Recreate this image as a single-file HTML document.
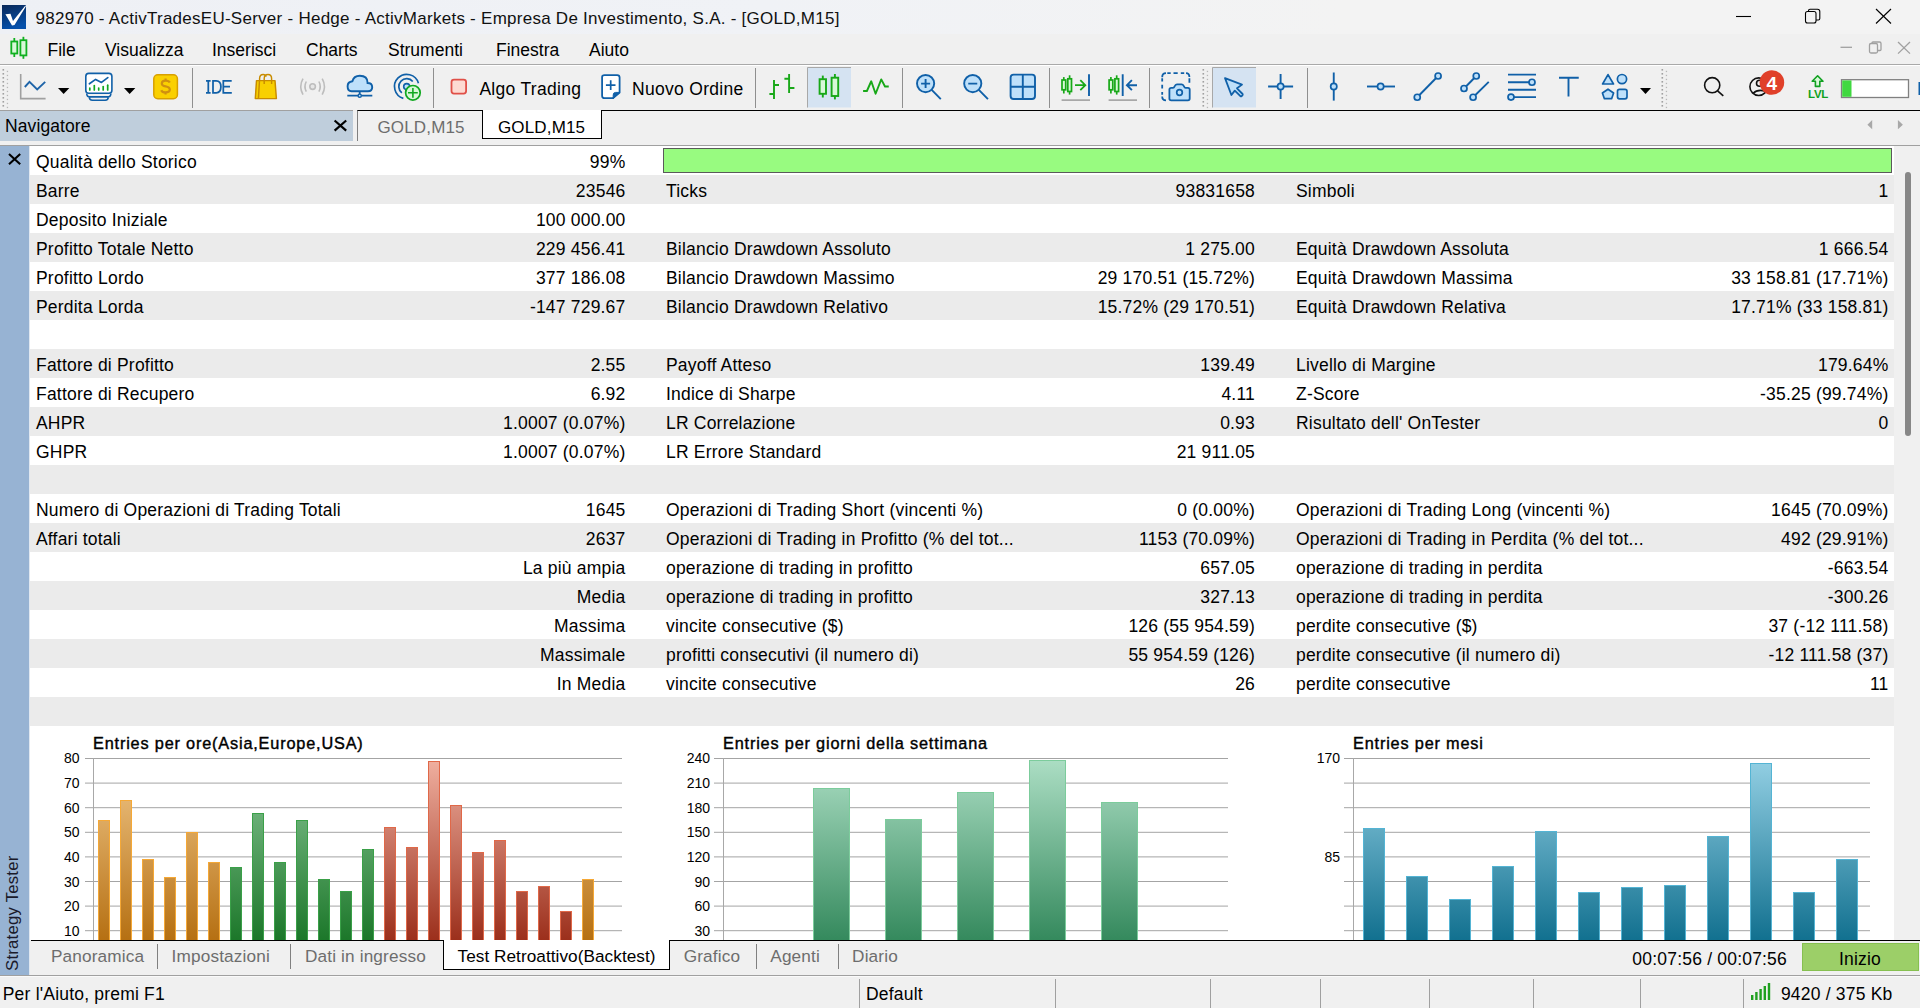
<!DOCTYPE html>
<html><head><meta charset="utf-8"><style>
*{margin:0;padding:0;box-sizing:border-box}
html,body{width:1920px;height:1008px;overflow:hidden;background:#f0f0f0;font-family:"Liberation Sans",sans-serif;color:#000}
.a{position:absolute}
.t{position:absolute;white-space:nowrap;font-size:17.5px;letter-spacing:0.2px;line-height:20px}
.r{text-align:right}
#title{left:0;top:0;width:1920px;height:34px;background:linear-gradient(90deg,#eef0f5 0%,#f0f2f6 40%,#f3f3f3 70%,#f3f3f3 100%)}
#menu{left:0;top:34px;width:1920px;height:30px;background:#f0f0f0}
#mline{left:0;top:64px;width:1920px;height:1px;background:#a9a9a9;box-shadow:0 1px 0 #fff}
#tool{left:0;top:65px;width:1920px;height:45px;background:#f0f0f0}
.sep{position:absolute;top:68px;width:1px;height:40px;background:#8f8f8f}
#navh{left:0;top:110px;width:353px;height:31px;background:#bfcedc;border-top:1px solid #a0a0a0}
#tabs{left:357px;top:110px;width:1563px;height:31px;border-top:1px solid #000;border-left:1px solid #808080}
#hline{left:0;top:145px;width:1920px;height:1px;background:#a0a0a0}
#strip{left:0;top:146px;width:29px;height:829px;background:#97b3d3}
#strip2{left:29px;top:146px;width:1px;height:829px;background:#dfe7f0}
.row{position:absolute;left:30px;width:1864px;height:29px}
.g{background:#ebebeb}
.w{background:#fff}
#scroll{left:1894px;top:146px;width:26px;height:794px;background:#f0f0f0}
#thumb{left:1905px;top:172px;width:6px;height:264px;background:#878787;border-radius:3px}
#chart{left:30px;top:726px;width:1864px;height:214px;background:#fff;overflow:hidden}
#btline{left:31px;top:940px;width:1889px;height:1px;background:#000}
#btabs{left:30px;top:941px;width:1890px;height:34px;background:#f0f0f0}
#sline{left:0;top:975px;width:1920px;height:1px;background:#a0a0a0}
#status{left:0;top:976px;width:1920px;height:32px;background:#f0f0f0}
.ssep{position:absolute;top:979px;width:1px;height:29px;background:#a0a0a0}
.tab{position:absolute;white-space:nowrap;font-size:17.5px;letter-spacing:0.2px;color:#6d6d6d;line-height:20px}
.tsep{position:absolute;top:944px;width:1px;height:25px;background:#808080}
.ax{position:absolute;font-size:13px;line-height:14px;text-align:right;width:40px;color:#000;letter-spacing:0.3px}
.ct{position:absolute;font-size:16.5px;letter-spacing:0.6px;line-height:18px;white-space:nowrap;-webkit-text-stroke:0.4px #000}

</style></head><body>
<div id="title" class="a"></div>
<div class="t" style="top:10.41px;font-size:17px;line-height:1;letter-spacing:0.26px;color:#111;left:35.60px;">982970 - ActivTradesEU-Server - Hedge - ActivMarkets - Empresa De Investimento, S.A. - [GOLD,M15]</div>
<div id="menu" class="a"></div><div id="tool" class="a"></div><div id="mline" class="a"></div>
<div class="t" style="top:41.79px;font-size:17.5px;line-height:1;letter-spacing:0px;left:47.50px;">File</div>
<div class="t" style="top:41.79px;font-size:17.5px;line-height:1;letter-spacing:0px;left:105.00px;">Visualizza</div>
<div class="t" style="top:41.79px;font-size:17.5px;line-height:1;letter-spacing:0px;left:212.00px;">Inserisci</div>
<div class="t" style="top:41.79px;font-size:17.5px;line-height:1;letter-spacing:0px;left:306.00px;">Charts</div>
<div class="t" style="top:41.79px;font-size:17.5px;line-height:1;letter-spacing:0px;left:388.00px;">Strumenti</div>
<div class="t" style="top:41.79px;font-size:17.5px;line-height:1;letter-spacing:0px;left:496.00px;">Finestra</div>
<div class="t" style="top:41.79px;font-size:17.5px;line-height:1;letter-spacing:0px;left:589.00px;">Aiuto</div>
<div class="t" style="top:81.19px;font-size:17.5px;line-height:1;letter-spacing:0.3px;left:479.40px;">Algo Trading</div>
<div class="t" style="top:81.19px;font-size:17.5px;line-height:1;letter-spacing:0.3px;left:632.00px;">Nuovo Ordine</div>
<div class="sep" style="left:192px"></div>
<div class="sep" style="left:433px"></div>
<div class="sep" style="left:755px"></div>
<div class="sep" style="left:902px"></div>
<div class="sep" style="left:1049px"></div>
<div class="sep" style="left:1149px"></div>
<div class="sep" style="left:1307px"></div>
<div id="navh" class="a"></div>
<div class="t" style="top:118.39px;font-size:17.5px;line-height:1;letter-spacing:0.1px;left:5.00px;">Navigatore</div>
<div id="tabs" class="a"></div>
<div class="a" style="left:482px;top:110px;width:120px;height:29px;background:#fff;border:1px solid #000;border-top:none"></div>
<div class="t" style="top:118.81px;font-size:17px;line-height:1;letter-spacing:0.15px;color:#6d6d6d;left:377.50px;">GOLD,M15</div>
<div class="t" style="top:118.81px;font-size:17px;line-height:1;letter-spacing:0.15px;left:498.00px;">GOLD,M15</div>
<div id="hline" class="a"></div>
<div id="strip" class="a"></div><div id="strip2" class="a"></div>
<div class="a" style="left:0;top:0;width:130px;height:17px;transform-origin:0 0;transform:translate(5.2px,971px) rotate(-90deg);font-size:16.8px;line-height:1;white-space:nowrap;letter-spacing:0.2px;color:#1a1a2a">Strategy Tester</div>
<div id="scroll" class="a"></div><div id="thumb" class="a"></div>
<div class="row w" style="top:146px"></div>
<div class="t" style="top:153.89px;font-size:17.5px;line-height:1;left:36.00px;">Qualità dello Storico</div>
<div class="t" style="top:153.89px;font-size:17.5px;line-height:1;right:1294.50px;">99%</div>
<div class="row g" style="top:175px"></div>
<div class="t" style="top:182.89px;font-size:17.5px;line-height:1;left:36.00px;">Barre</div>
<div class="t" style="top:182.89px;font-size:17.5px;line-height:1;right:1294.50px;">23546</div>
<div class="t" style="top:182.89px;font-size:17.5px;line-height:1;left:666.00px;">Ticks</div>
<div class="t" style="top:182.89px;font-size:17.5px;line-height:1;right:665.00px;">93831658</div>
<div class="t" style="top:182.89px;font-size:17.5px;line-height:1;left:1296.00px;">Simboli</div>
<div class="t" style="top:182.89px;font-size:17.5px;line-height:1;right:31.50px;">1</div>
<div class="row w" style="top:204px"></div>
<div class="t" style="top:211.89px;font-size:17.5px;line-height:1;left:36.00px;">Deposito Iniziale</div>
<div class="t" style="top:211.89px;font-size:17.5px;line-height:1;right:1294.50px;">100 000.00</div>
<div class="row g" style="top:233px"></div>
<div class="t" style="top:240.89px;font-size:17.5px;line-height:1;left:36.00px;">Profitto Totale Netto</div>
<div class="t" style="top:240.89px;font-size:17.5px;line-height:1;right:1294.50px;">229 456.41</div>
<div class="t" style="top:240.89px;font-size:17.5px;line-height:1;left:666.00px;">Bilancio Drawdown Assoluto</div>
<div class="t" style="top:240.89px;font-size:17.5px;line-height:1;right:665.00px;">1 275.00</div>
<div class="t" style="top:240.89px;font-size:17.5px;line-height:1;left:1296.00px;">Equità Drawdown Assoluta</div>
<div class="t" style="top:240.89px;font-size:17.5px;line-height:1;right:31.50px;">1 666.54</div>
<div class="row w" style="top:262px"></div>
<div class="t" style="top:269.89px;font-size:17.5px;line-height:1;left:36.00px;">Profitto Lordo</div>
<div class="t" style="top:269.89px;font-size:17.5px;line-height:1;right:1294.50px;">377 186.08</div>
<div class="t" style="top:269.89px;font-size:17.5px;line-height:1;left:666.00px;">Bilancio Drawdown Massimo</div>
<div class="t" style="top:269.89px;font-size:17.5px;line-height:1;right:665.00px;">29 170.51 (15.72%)</div>
<div class="t" style="top:269.89px;font-size:17.5px;line-height:1;left:1296.00px;">Equità Drawdown Massima</div>
<div class="t" style="top:269.89px;font-size:17.5px;line-height:1;right:31.50px;">33 158.81 (17.71%)</div>
<div class="row g" style="top:291px"></div>
<div class="t" style="top:298.89px;font-size:17.5px;line-height:1;left:36.00px;">Perdita Lorda</div>
<div class="t" style="top:298.89px;font-size:17.5px;line-height:1;right:1294.50px;">-147 729.67</div>
<div class="t" style="top:298.89px;font-size:17.5px;line-height:1;left:666.00px;">Bilancio Drawdown Relativo</div>
<div class="t" style="top:298.89px;font-size:17.5px;line-height:1;right:665.00px;">15.72% (29 170.51)</div>
<div class="t" style="top:298.89px;font-size:17.5px;line-height:1;left:1296.00px;">Equità Drawdown Relativa</div>
<div class="t" style="top:298.89px;font-size:17.5px;line-height:1;right:31.50px;">17.71% (33 158.81)</div>
<div class="row w" style="top:320px"></div>
<div class="row g" style="top:349px"></div>
<div class="t" style="top:356.89px;font-size:17.5px;line-height:1;left:36.00px;">Fattore di Profitto</div>
<div class="t" style="top:356.89px;font-size:17.5px;line-height:1;right:1294.50px;">2.55</div>
<div class="t" style="top:356.89px;font-size:17.5px;line-height:1;left:666.00px;">Payoff Atteso</div>
<div class="t" style="top:356.89px;font-size:17.5px;line-height:1;right:665.00px;">139.49</div>
<div class="t" style="top:356.89px;font-size:17.5px;line-height:1;left:1296.00px;">Livello di Margine</div>
<div class="t" style="top:356.89px;font-size:17.5px;line-height:1;right:31.50px;">179.64%</div>
<div class="row w" style="top:378px"></div>
<div class="t" style="top:385.89px;font-size:17.5px;line-height:1;left:36.00px;">Fattore di Recupero</div>
<div class="t" style="top:385.89px;font-size:17.5px;line-height:1;right:1294.50px;">6.92</div>
<div class="t" style="top:385.89px;font-size:17.5px;line-height:1;left:666.00px;">Indice di Sharpe</div>
<div class="t" style="top:385.89px;font-size:17.5px;line-height:1;right:665.00px;">4.11</div>
<div class="t" style="top:385.89px;font-size:17.5px;line-height:1;left:1296.00px;">Z-Score</div>
<div class="t" style="top:385.89px;font-size:17.5px;line-height:1;right:31.50px;">-35.25 (99.74%)</div>
<div class="row g" style="top:407px"></div>
<div class="t" style="top:414.89px;font-size:17.5px;line-height:1;left:36.00px;">AHPR</div>
<div class="t" style="top:414.89px;font-size:17.5px;line-height:1;right:1294.50px;">1.0007 (0.07%)</div>
<div class="t" style="top:414.89px;font-size:17.5px;line-height:1;left:666.00px;">LR Correlazione</div>
<div class="t" style="top:414.89px;font-size:17.5px;line-height:1;right:665.00px;">0.93</div>
<div class="t" style="top:414.89px;font-size:17.5px;line-height:1;left:1296.00px;">Risultato dell' OnTester</div>
<div class="t" style="top:414.89px;font-size:17.5px;line-height:1;right:31.50px;">0</div>
<div class="row w" style="top:436px"></div>
<div class="t" style="top:443.89px;font-size:17.5px;line-height:1;left:36.00px;">GHPR</div>
<div class="t" style="top:443.89px;font-size:17.5px;line-height:1;right:1294.50px;">1.0007 (0.07%)</div>
<div class="t" style="top:443.89px;font-size:17.5px;line-height:1;left:666.00px;">LR Errore Standard</div>
<div class="t" style="top:443.89px;font-size:17.5px;line-height:1;right:665.00px;">21 911.05</div>
<div class="row g" style="top:465px"></div>
<div class="row w" style="top:494px"></div>
<div class="t" style="top:501.89px;font-size:17.5px;line-height:1;left:36.00px;">Numero di Operazioni di Trading Totali</div>
<div class="t" style="top:501.89px;font-size:17.5px;line-height:1;right:1294.50px;">1645</div>
<div class="t" style="top:501.89px;font-size:17.5px;line-height:1;left:666.00px;">Operazioni di Trading Short (vincenti %)</div>
<div class="t" style="top:501.89px;font-size:17.5px;line-height:1;right:665.00px;">0 (0.00%)</div>
<div class="t" style="top:501.89px;font-size:17.5px;line-height:1;left:1296.00px;">Operazioni di Trading Long (vincenti %)</div>
<div class="t" style="top:501.89px;font-size:17.5px;line-height:1;right:31.50px;">1645 (70.09%)</div>
<div class="row g" style="top:523px"></div>
<div class="t" style="top:530.89px;font-size:17.5px;line-height:1;left:36.00px;">Affari totali</div>
<div class="t" style="top:530.89px;font-size:17.5px;line-height:1;right:1294.50px;">2637</div>
<div class="t" style="top:530.89px;font-size:17.5px;line-height:1;left:666.00px;">Operazioni di Trading in Profitto (% del tot...</div>
<div class="t" style="top:530.89px;font-size:17.5px;line-height:1;right:665.00px;">1153 (70.09%)</div>
<div class="t" style="top:530.89px;font-size:17.5px;line-height:1;left:1296.00px;">Operazioni di Trading in Perdita (% del tot...</div>
<div class="t" style="top:530.89px;font-size:17.5px;line-height:1;right:31.50px;">492 (29.91%)</div>
<div class="row w" style="top:552px"></div>
<div class="t" style="top:559.89px;font-size:17.5px;line-height:1;right:1294.50px;">La più ampia</div>
<div class="t" style="top:559.89px;font-size:17.5px;line-height:1;left:666.00px;">operazione di trading in profitto</div>
<div class="t" style="top:559.89px;font-size:17.5px;line-height:1;right:665.00px;">657.05</div>
<div class="t" style="top:559.89px;font-size:17.5px;line-height:1;left:1296.00px;">operazione di trading in perdita</div>
<div class="t" style="top:559.89px;font-size:17.5px;line-height:1;right:31.50px;">-663.54</div>
<div class="row g" style="top:581px"></div>
<div class="t" style="top:588.89px;font-size:17.5px;line-height:1;right:1294.50px;">Media</div>
<div class="t" style="top:588.89px;font-size:17.5px;line-height:1;left:666.00px;">operazione di trading in profitto</div>
<div class="t" style="top:588.89px;font-size:17.5px;line-height:1;right:665.00px;">327.13</div>
<div class="t" style="top:588.89px;font-size:17.5px;line-height:1;left:1296.00px;">operazione di trading in perdita</div>
<div class="t" style="top:588.89px;font-size:17.5px;line-height:1;right:31.50px;">-300.26</div>
<div class="row w" style="top:610px"></div>
<div class="t" style="top:617.89px;font-size:17.5px;line-height:1;right:1294.50px;">Massima</div>
<div class="t" style="top:617.89px;font-size:17.5px;line-height:1;left:666.00px;">vincite consecutive ($)</div>
<div class="t" style="top:617.89px;font-size:17.5px;line-height:1;right:665.00px;">126 (55 954.59)</div>
<div class="t" style="top:617.89px;font-size:17.5px;line-height:1;left:1296.00px;">perdite consecutive ($)</div>
<div class="t" style="top:617.89px;font-size:17.5px;line-height:1;right:31.50px;">37 (-12 111.58)</div>
<div class="row g" style="top:639px"></div>
<div class="t" style="top:646.89px;font-size:17.5px;line-height:1;right:1294.50px;">Massimale</div>
<div class="t" style="top:646.89px;font-size:17.5px;line-height:1;left:666.00px;">profitti consecutivi (il numero di)</div>
<div class="t" style="top:646.89px;font-size:17.5px;line-height:1;right:665.00px;">55 954.59 (126)</div>
<div class="t" style="top:646.89px;font-size:17.5px;line-height:1;left:1296.00px;">perdite consecutive (il numero di)</div>
<div class="t" style="top:646.89px;font-size:17.5px;line-height:1;right:31.50px;">-12 111.58 (37)</div>
<div class="row w" style="top:668px"></div>
<div class="t" style="top:675.89px;font-size:17.5px;line-height:1;right:1294.50px;">In Media</div>
<div class="t" style="top:675.89px;font-size:17.5px;line-height:1;left:666.00px;">vincite consecutive</div>
<div class="t" style="top:675.89px;font-size:17.5px;line-height:1;right:665.00px;">26</div>
<div class="t" style="top:675.89px;font-size:17.5px;line-height:1;left:1296.00px;">perdite consecutive</div>
<div class="t" style="top:675.89px;font-size:17.5px;line-height:1;right:31.50px;">11</div>
<div class="row g" style="top:697px"></div>
<div id="chart" class="a"></div>
<div class="a" style="left:663px;top:148px;width:1229px;height:25px;background:#98fb80;border:1px solid #5a5a5a"></div>
<div class="ct" style="left:93px;top:734.50px;font-size:16.3px;line-height:1;letter-spacing:0.82px">Entries per ore(Asia,Europe,USA)</div>
<div class="a" style="left:19.5px;top:750px;width:60px;text-align:right;font-size:14px;line-height:16px">80</div>
<div class="a" style="left:19.5px;top:775px;width:60px;text-align:right;font-size:14px;line-height:16px">70</div>
<div class="a" style="left:19.5px;top:800px;width:60px;text-align:right;font-size:14px;line-height:16px">60</div>
<div class="a" style="left:19.5px;top:824px;width:60px;text-align:right;font-size:14px;line-height:16px">50</div>
<div class="a" style="left:19.5px;top:849px;width:60px;text-align:right;font-size:14px;line-height:16px">40</div>
<div class="a" style="left:19.5px;top:874px;width:60px;text-align:right;font-size:14px;line-height:16px">30</div>
<div class="a" style="left:19.5px;top:898px;width:60px;text-align:right;font-size:14px;line-height:16px">20</div>
<div class="a" style="left:19.5px;top:923px;width:60px;text-align:right;font-size:14px;line-height:16px">10</div>
<svg class="a" style="left:0;top:0" width="1920" height="1008"><g stroke="#a4a4a4" stroke-width="1"><line x1="85" y1="758.50" x2="622" y2="758.50"/><line x1="85" y1="783.10" x2="622" y2="783.10"/><line x1="85" y1="807.70" x2="622" y2="807.70"/><line x1="85" y1="832.30" x2="622" y2="832.30"/><line x1="85" y1="856.90" x2="622" y2="856.90"/><line x1="85" y1="881.50" x2="622" y2="881.50"/><line x1="85" y1="906.10" x2="622" y2="906.10"/><line x1="85" y1="930.70" x2="622" y2="930.70"/></g></svg>
<div class="a" style="left:93px;top:758px;width:1px;height:182px;background:#a8a8a8"></div>
<div class="a" style="left:98px;top:820px;width:12px;height:120px;border:1px solid #f5a836;border-bottom:none;background:linear-gradient(180deg,#f2c88a,#b06808) 0 -62px/100% 197px no-repeat"></div>
<div class="a" style="left:120px;top:800px;width:12px;height:140px;border:1px solid #f5a836;border-bottom:none;background:linear-gradient(180deg,#f2c88a,#b06808) 0 -42px/100% 197px no-repeat"></div>
<div class="a" style="left:142px;top:859px;width:12px;height:81px;border:1px solid #f5a836;border-bottom:none;background:linear-gradient(180deg,#f2c88a,#b06808) 0 -101px/100% 197px no-repeat"></div>
<div class="a" style="left:164px;top:877px;width:12px;height:63px;border:1px solid #f5a836;border-bottom:none;background:linear-gradient(180deg,#f2c88a,#b06808) 0 -119px/100% 197px no-repeat"></div>
<div class="a" style="left:186px;top:832px;width:12px;height:108px;border:1px solid #f5a836;border-bottom:none;background:linear-gradient(180deg,#f2c88a,#b06808) 0 -74px/100% 197px no-repeat"></div>
<div class="a" style="left:208px;top:862px;width:12px;height:78px;border:1px solid #f5a836;border-bottom:none;background:linear-gradient(180deg,#f2c88a,#b06808) 0 -104px/100% 197px no-repeat"></div>
<div class="a" style="left:230px;top:867px;width:12px;height:73px;border:1px solid #3aa048;border-bottom:none;background:linear-gradient(180deg,#8cc898,#127020) 0 -109px/100% 197px no-repeat"></div>
<div class="a" style="left:252px;top:813px;width:12px;height:127px;border:1px solid #3aa048;border-bottom:none;background:linear-gradient(180deg,#8cc898,#127020) 0 -55px/100% 197px no-repeat"></div>
<div class="a" style="left:274px;top:862px;width:12px;height:78px;border:1px solid #3aa048;border-bottom:none;background:linear-gradient(180deg,#8cc898,#127020) 0 -104px/100% 197px no-repeat"></div>
<div class="a" style="left:296px;top:820px;width:12px;height:120px;border:1px solid #3aa048;border-bottom:none;background:linear-gradient(180deg,#8cc898,#127020) 0 -62px/100% 197px no-repeat"></div>
<div class="a" style="left:318px;top:879px;width:12px;height:61px;border:1px solid #3aa048;border-bottom:none;background:linear-gradient(180deg,#8cc898,#127020) 0 -121px/100% 197px no-repeat"></div>
<div class="a" style="left:340px;top:891px;width:12px;height:49px;border:1px solid #3aa048;border-bottom:none;background:linear-gradient(180deg,#8cc898,#127020) 0 -133px/100% 197px no-repeat"></div>
<div class="a" style="left:362px;top:849px;width:12px;height:91px;border:1px solid #3aa048;border-bottom:none;background:linear-gradient(180deg,#8cc898,#127020) 0 -91px/100% 197px no-repeat"></div>
<div class="a" style="left:384px;top:827px;width:12px;height:113px;border:1px solid #e06848;border-bottom:none;background:linear-gradient(180deg,#f0b0a0,#942410) 0 -69px/100% 197px no-repeat"></div>
<div class="a" style="left:406px;top:847px;width:12px;height:93px;border:1px solid #e06848;border-bottom:none;background:linear-gradient(180deg,#f0b0a0,#942410) 0 -89px/100% 197px no-repeat"></div>
<div class="a" style="left:428px;top:761px;width:12px;height:179px;border:1px solid #e06848;border-bottom:none;background:linear-gradient(180deg,#f0b0a0,#942410) 0 -3px/100% 197px no-repeat"></div>
<div class="a" style="left:450px;top:805px;width:12px;height:135px;border:1px solid #e06848;border-bottom:none;background:linear-gradient(180deg,#f0b0a0,#942410) 0 -47px/100% 197px no-repeat"></div>
<div class="a" style="left:472px;top:852px;width:12px;height:88px;border:1px solid #e06848;border-bottom:none;background:linear-gradient(180deg,#f0b0a0,#942410) 0 -94px/100% 197px no-repeat"></div>
<div class="a" style="left:494px;top:840px;width:12px;height:100px;border:1px solid #e06848;border-bottom:none;background:linear-gradient(180deg,#f0b0a0,#942410) 0 -82px/100% 197px no-repeat"></div>
<div class="a" style="left:516px;top:891px;width:12px;height:49px;border:1px solid #e06848;border-bottom:none;background:linear-gradient(180deg,#f0b0a0,#942410) 0 -133px/100% 197px no-repeat"></div>
<div class="a" style="left:538px;top:886px;width:12px;height:54px;border:1px solid #e06848;border-bottom:none;background:linear-gradient(180deg,#f0b0a0,#942410) 0 -128px/100% 197px no-repeat"></div>
<div class="a" style="left:560px;top:911px;width:12px;height:29px;border:1px solid #e06848;border-bottom:none;background:linear-gradient(180deg,#f0b0a0,#942410) 0 -153px/100% 197px no-repeat"></div>
<div class="a" style="left:582px;top:879px;width:12px;height:61px;border:1px solid #f5a836;border-bottom:none;background:linear-gradient(180deg,#f2c88a,#b06808) 0 -121px/100% 197px no-repeat"></div>
<div class="ct" style="left:723px;top:734.50px;font-size:16.3px;line-height:1;letter-spacing:0.82px">Entries per giorni della settimana</div>
<div class="a" style="left:650px;top:750px;width:60px;text-align:right;font-size:14px;line-height:16px">240</div>
<div class="a" style="left:650px;top:775px;width:60px;text-align:right;font-size:14px;line-height:16px">210</div>
<div class="a" style="left:650px;top:800px;width:60px;text-align:right;font-size:14px;line-height:16px">180</div>
<div class="a" style="left:650px;top:824px;width:60px;text-align:right;font-size:14px;line-height:16px">150</div>
<div class="a" style="left:650px;top:849px;width:60px;text-align:right;font-size:14px;line-height:16px">120</div>
<div class="a" style="left:650px;top:874px;width:60px;text-align:right;font-size:14px;line-height:16px">90</div>
<div class="a" style="left:650px;top:898px;width:60px;text-align:right;font-size:14px;line-height:16px">60</div>
<div class="a" style="left:650px;top:923px;width:60px;text-align:right;font-size:14px;line-height:16px">30</div>
<svg class="a" style="left:0;top:0" width="1920" height="1008"><g stroke="#a4a4a4" stroke-width="1"><line x1="714" y1="758.50" x2="1228" y2="758.50"/><line x1="714" y1="783.10" x2="1228" y2="783.10"/><line x1="714" y1="807.70" x2="1228" y2="807.70"/><line x1="714" y1="832.30" x2="1228" y2="832.30"/><line x1="714" y1="856.90" x2="1228" y2="856.90"/><line x1="714" y1="881.50" x2="1228" y2="881.50"/><line x1="714" y1="906.10" x2="1228" y2="906.10"/><line x1="714" y1="930.70" x2="1228" y2="930.70"/></g></svg>
<div class="a" style="left:723px;top:758px;width:1px;height:182px;background:#a8a8a8"></div>
<div class="a" style="left:813px;top:788px;width:37px;height:152px;border:1px solid #7ccc9c;border-bottom:none;background:linear-gradient(180deg,#acdec4,#2a8254) 0 -30px/100% 197px no-repeat"></div>
<div class="a" style="left:885px;top:819px;width:37px;height:121px;border:1px solid #7ccc9c;border-bottom:none;background:linear-gradient(180deg,#acdec4,#2a8254) 0 -61px/100% 197px no-repeat"></div>
<div class="a" style="left:957px;top:792px;width:37px;height:148px;border:1px solid #7ccc9c;border-bottom:none;background:linear-gradient(180deg,#acdec4,#2a8254) 0 -34px/100% 197px no-repeat"></div>
<div class="a" style="left:1029px;top:760px;width:37px;height:180px;border:1px solid #7ccc9c;border-bottom:none;background:linear-gradient(180deg,#acdec4,#2a8254) 0 -2px/100% 197px no-repeat"></div>
<div class="a" style="left:1101px;top:802px;width:37px;height:138px;border:1px solid #7ccc9c;border-bottom:none;background:linear-gradient(180deg,#acdec4,#2a8254) 0 -44px/100% 197px no-repeat"></div>
<div class="ct" style="left:1353px;top:734.50px;font-size:16.3px;line-height:1;letter-spacing:0.82px">Entries per mesi</div>
<div class="a" style="left:1280px;top:750px;width:60px;text-align:right;font-size:14px;line-height:16px">170</div>
<div class="a" style="left:1280px;top:849px;width:60px;text-align:right;font-size:14px;line-height:16px">85</div>
<svg class="a" style="left:0;top:0" width="1920" height="1008"><g stroke="#a4a4a4" stroke-width="1"><line x1="1344" y1="758.50" x2="1870" y2="758.50"/><line x1="1344" y1="783.10" x2="1870" y2="783.10"/><line x1="1344" y1="807.70" x2="1870" y2="807.70"/><line x1="1344" y1="832.30" x2="1870" y2="832.30"/><line x1="1344" y1="856.90" x2="1870" y2="856.90"/><line x1="1344" y1="881.50" x2="1870" y2="881.50"/><line x1="1344" y1="906.10" x2="1870" y2="906.10"/><line x1="1344" y1="930.70" x2="1870" y2="930.70"/></g></svg>
<div class="a" style="left:1353px;top:758px;width:1px;height:182px;background:#a8a8a8"></div>
<div class="a" style="left:1363px;top:828px;width:22px;height:112px;border:1px solid #54b4d4;border-bottom:none;background:linear-gradient(180deg,#94d0e4,#066888) 0 -70px/100% 197px no-repeat"></div>
<div class="a" style="left:1406px;top:876px;width:22px;height:64px;border:1px solid #54b4d4;border-bottom:none;background:linear-gradient(180deg,#94d0e4,#066888) 0 -118px/100% 197px no-repeat"></div>
<div class="a" style="left:1449px;top:899px;width:22px;height:41px;border:1px solid #54b4d4;border-bottom:none;background:linear-gradient(180deg,#94d0e4,#066888) 0 -141px/100% 197px no-repeat"></div>
<div class="a" style="left:1492px;top:866px;width:22px;height:74px;border:1px solid #54b4d4;border-bottom:none;background:linear-gradient(180deg,#94d0e4,#066888) 0 -108px/100% 197px no-repeat"></div>
<div class="a" style="left:1535px;top:831px;width:22px;height:109px;border:1px solid #54b4d4;border-bottom:none;background:linear-gradient(180deg,#94d0e4,#066888) 0 -73px/100% 197px no-repeat"></div>
<div class="a" style="left:1578px;top:892px;width:22px;height:48px;border:1px solid #54b4d4;border-bottom:none;background:linear-gradient(180deg,#94d0e4,#066888) 0 -134px/100% 197px no-repeat"></div>
<div class="a" style="left:1621px;top:887px;width:22px;height:53px;border:1px solid #54b4d4;border-bottom:none;background:linear-gradient(180deg,#94d0e4,#066888) 0 -129px/100% 197px no-repeat"></div>
<div class="a" style="left:1664px;top:885px;width:22px;height:55px;border:1px solid #54b4d4;border-bottom:none;background:linear-gradient(180deg,#94d0e4,#066888) 0 -127px/100% 197px no-repeat"></div>
<div class="a" style="left:1707px;top:836px;width:22px;height:104px;border:1px solid #54b4d4;border-bottom:none;background:linear-gradient(180deg,#94d0e4,#066888) 0 -78px/100% 197px no-repeat"></div>
<div class="a" style="left:1750px;top:763px;width:22px;height:177px;border:1px solid #54b4d4;border-bottom:none;background:linear-gradient(180deg,#94d0e4,#066888) 0 -5px/100% 197px no-repeat"></div>
<div class="a" style="left:1793px;top:892px;width:22px;height:48px;border:1px solid #54b4d4;border-bottom:none;background:linear-gradient(180deg,#94d0e4,#066888) 0 -134px/100% 197px no-repeat"></div>
<div class="a" style="left:1836px;top:859px;width:22px;height:81px;border:1px solid #54b4d4;border-bottom:none;background:linear-gradient(180deg,#94d0e4,#066888) 0 -101px/100% 197px no-repeat"></div>
<div id="btabs" class="a"></div><div id="btline" class="a"></div>
<div class="a" style="left:443px;top:940px;width:227px;height:30px;background:#fff;border:1px solid #000;border-top:none"></div>
<div class="t" style="top:947.84px;font-size:17.2px;line-height:1;letter-spacing:0.15px;color:#6d6d6d;left:50.90px;">Panoramica</div>
<div class="t" style="top:947.84px;font-size:17.2px;line-height:1;letter-spacing:0.15px;color:#6d6d6d;left:171.60px;">Impostazioni</div>
<div class="t" style="top:947.84px;font-size:17.2px;line-height:1;letter-spacing:0.15px;color:#6d6d6d;left:305.00px;">Dati in ingresso</div>
<div class="t" style="top:947.84px;font-size:17.2px;line-height:1;letter-spacing:0.15px;color:#6d6d6d;left:683.70px;">Grafico</div>
<div class="t" style="top:947.84px;font-size:17.2px;line-height:1;letter-spacing:0.15px;color:#6d6d6d;left:770.30px;">Agenti</div>
<div class="t" style="top:947.84px;font-size:17.2px;line-height:1;letter-spacing:0.15px;color:#6d6d6d;left:852.10px;">Diario</div>
<div class="t" style="top:947.84px;font-size:17.2px;line-height:1;letter-spacing:0.05px;left:457.50px;">Test Retroattivo(Backtest)</div>
<div class="tsep" style="left:157px"></div>
<div class="tsep" style="left:290px"></div>
<div class="tsep" style="left:756px"></div>
<div class="tsep" style="left:838px"></div>
<div class="t" style="top:950.99px;font-size:17.5px;line-height:1;letter-spacing:0.2px;right:133.00px;">00:07:56 / 00:07:56</div>
<div class="a" style="left:1802px;top:943px;width:117px;height:28px;background:#9ccf68;border:1px solid #86c050"></div>
<div class="t" style="top:950.99px;font-size:17.5px;line-height:1;letter-spacing:0.2px;left:1560.00px;width:600px;text-align:center;">Inizio</div>
<div id="sline" class="a"></div><div id="status" class="a"></div><div class="a" style="left:0;top:976px;width:1920px;height:1px;background:#fafafa"></div>
<div class="t" style="top:985.59px;font-size:17.5px;line-height:1;letter-spacing:0.2px;left:2.75px;">Per l'Aiuto, premi F1</div>
<div class="t" style="top:986.39px;font-size:17.5px;line-height:1;letter-spacing:0.2px;left:866.00px;">Default</div>
<div class="ssep" style="left:859px"></div>
<div class="ssep" style="left:1055px"></div>
<div class="ssep" style="left:1210px"></div>
<div class="ssep" style="left:1320px"></div>
<div class="ssep" style="left:1429px"></div>
<div class="ssep" style="left:1533px"></div>
<div class="ssep" style="left:1640px"></div>
<div class="ssep" style="left:1743px"></div>
<div class="t" style="top:986.39px;font-size:17.5px;line-height:1;letter-spacing:0.2px;right:27.50px;">9420 / 375 Kb</div>
<svg class="a" style="left:0;top:0" width="1920" height="1008" viewBox="0 0 1920 1008"><defs>
<linearGradient id="appg" x1="0" y1="0" x2="0.3" y2="1"><stop offset="0" stop-color="#0a2858"/><stop offset="1" stop-color="#0650aa"/></linearGradient>
</defs>
<!-- app icon -->
<rect x="2" y="5" width="24" height="24" fill="url(#appg)"/>
<path d="M5.4 14.2 L10.5 13.8 L13 21 L25.6 5.2 L25.8 6.5 L14.5 25 L12 25.4 Z" fill="#fff"/>
<!-- menu candles -->
<g stroke="#10b020" stroke-width="1.8" fill="#d8f8d8">
<line x1="14.3" y1="38" x2="14.3" y2="57"/><rect x="11.3" y="41.5" width="6" height="12"/>
<line x1="23.4" y1="36.8" x2="23.4" y2="58.8"/><rect x="20.4" y="40.2" width="6" height="15.2"/>
</g>
<!-- window controls -->
<g stroke="#000" stroke-width="1.1" fill="none">
<line x1="1736" y1="16.5" x2="1751" y2="16.5"/>
<rect x="1805.5" y="11.5" width="10.5" height="11.5" rx="2"/>
<path d="M1808.5 11.5 V10.8 Q1808.5 9.3 1810 9.3 H1817.5 Q1819.8 9.3 1819.8 11.6 V18.5 Q1819.8 20 1818.3 20 H1816"/>
<line x1="1876" y1="9" x2="1891" y2="23.5"/><line x1="1891" y1="9" x2="1876" y2="23.5"/>
</g>
<g stroke="#a0a0a0" stroke-width="1.3" fill="none">
<line x1="1840.5" y1="47.3" x2="1852" y2="47.3"/>
<rect x="1869.5" y="43.5" width="8" height="9.5" rx="1.5"/>
<path d="M1872 43.5 V43 Q1872 42 1873 42 H1879.5 Q1881 42 1881 43.5 V49.5 Q1881 50.5 1880 50.5 H1877.5"/>
<line x1="1898" y1="42" x2="1910" y2="53.6"/><line x1="1910" y1="42" x2="1898" y2="53.6"/>
</g>
<!-- grips -->
<g fill="#a8a8a8">

</g>
<!-- line chart icon -->
<path d="M20.7 74 V98.6 H45.6" stroke="#a0a0a0" stroke-width="1.6" fill="none"/>
<path d="M24.8 87 L29.5 81.9 L37.2 89.5 L45.2 81.9" stroke="#1e64a8" stroke-width="1.9" fill="none"/>
<path d="M58 88 H69.3 L63.65 94 Z" fill="#000"/>
<!-- monitor icon -->
<rect x="85.8" y="73.4" width="26.1" height="19.8" rx="3" fill="#fff" stroke="#1060a8" stroke-width="1.6"/>
<path d="M86.7 93.4 Q86.8 96.9 90 96.9 H107.6 Q110.8 96.9 110.9 93.4 M89.3 96.9 Q89.4 100.2 92.4 100.2 H105.2 Q108.2 100.2 108.3 96.9" stroke="#1060a8" stroke-width="1.6" fill="none"/>
<path d="M89.4 83.8 L95.6 79.4 L101.5 82.4 L107.8 77.6" stroke="#1060a8" stroke-width="1.7" fill="none" stroke-linecap="round" stroke-linejoin="round"/>
<g stroke="#10a820" stroke-width="1.7" stroke-linecap="round">
<line x1="89.8" y1="90" x2="89.8" y2="88"/><line x1="94.3" y1="90" x2="94.3" y2="85.6"/><line x1="98.7" y1="90" x2="98.7" y2="88"/><line x1="103.2" y1="90" x2="103.2" y2="86.6"/><line x1="107.7" y1="90" x2="107.7" y2="85.2"/>
</g>
<path d="M124 88 H135.3 L129.65 94 Z" fill="#000"/>
<!-- dollar -->
<rect x="153.8" y="74.8" width="23.6" height="23.9" rx="4" fill="#fad000" stroke="#d8a000" stroke-width="1.5"/>
<path d="M169.8 82.6 Q168.8 80.6 165.6 80.6 Q161.8 80.6 161.8 83.4 Q161.8 85.6 165.6 86.4 Q169.8 87.2 169.8 89.6 Q169.8 92.4 165.6 92.4 Q162.2 92.4 161.2 90.2 M165.6 78.6 V80.6 M165.6 92.4 V94.6" fill="none" stroke="#d09010" stroke-width="2.2"/>
<!-- IDE -->
<g fill="none" stroke="#1060a8" stroke-width="1.75">
<path d="M206 80.9 H210.6 M208.3 80.9 V92.8 M206 92.8 H210.6"/>
<path d="M213 80.9 V92.8 H216.2 Q220.9 92.8 220.9 86.85 Q220.9 80.9 216.2 80.9 Z"/>
<path d="M231.7 80.9 H223.3 V92.8 H231.8 M223.3 86.7 H230"/>
</g>
<!-- bag -->
<g stroke="#c88c00" stroke-width="1.45" fill="#f8d000" stroke-linejoin="round">
<path d="M256.5 80.6 H275 L276.4 98.6 H255.3 Z"/>
<path d="M259.5 80.6 L258.4 98.6" fill="none"/>
<path d="M259.6 80.6 V78.6 Q259.6 74.4 263.2 74.4 Q265.6 74.4 266.2 76.6" fill="none"/>
<path d="M264.2 84 V78.6 Q264.2 74.4 268 74.4 Q271.6 74.4 271.6 78.6 V84" fill="none"/>
</g>
<!-- signal gray -->
<g stroke="#bdbdbd" stroke-width="1.6" fill="none">
<circle cx="312.6" cy="86.6" r="2.8" fill="#e6e6e6"/>
<path d="M306.3 81.5 Q303.6 86.6 306.3 91.7 M318.9 81.5 Q321.6 86.6 318.9 91.7"/>
<path d="M303 78.6 Q298.5 86.6 303 94.6 M322.2 78.6 Q326.7 86.6 322.2 94.6"/>
</g>
<!-- cloud -->
<path d="M351.5 91.2 H368 Q372.2 91.2 372.2 87.2 Q372.2 83 367.6 83 Q367.6 75.8 359.8 75.8 Q353.8 75.8 352.4 81.2 Q347.6 81.8 347.6 86.2 Q347.6 91.2 351.5 91.2 Z" fill="#bee0fa" stroke="#1060a8" stroke-width="1.9"/>
<path d="M347.3 95.7 H372.3 M359.7 91.5 V94" stroke="#1060a8" stroke-width="1.8" fill="none"/>
<circle cx="359.7" cy="95.7" r="1.6" fill="#bee0fa" stroke="#1060a8" stroke-width="1.4"/>
<!-- radar -->
<g stroke="#1060a8" stroke-width="1.7" fill="none">
<path d="M403.34 98.33 A12.2 12.2 0 1 1 418.43 83.24"/>
<path d="M401.84 92.83 A7.9 7.9 0 1 1 412.75 81.52"/>
</g>
<circle cx="406.7" cy="86.6" r="3" fill="#bee0fa" stroke="#1060a8" stroke-width="1.6"/>
<circle cx="412.9" cy="92.8" r="7.3" fill="#d8f8d8" stroke="#10a820" stroke-width="1.7"/>
<path d="M408 92.8 H417.8 M412.9 87.9 V97.7" stroke="#10a820" stroke-width="1.6"/>
<!-- algo trading square -->
<rect x="451.5" y="79.6" width="14.6" height="14" rx="2.5" fill="#fddad2" stroke="#e05048" stroke-width="1.8"/>
<!-- new order doc -->
<path d="M602.1 77 Q602.1 75.1 604.6 75.1 H617.2 Q619.6 75.1 619.6 77.6 V92.6 L612.8 98.2 H604.6 Q602.1 98.2 602.1 95.7 Z" fill="#fff" stroke="#1060a8" stroke-width="1.8" stroke-linejoin="round"/>
<path d="M619.9 92.4 H615.6 Q613.2 92.4 613.2 95 V98.6 Z" fill="#1060a8" stroke="#1060a8" stroke-width="1" stroke-linejoin="round"/>
<path d="M605.9 85.2 H615.5 M610.7 80.3 V90.1" stroke="#1060a8" stroke-width="1.7"/>
<rect x="2.5" y="69" width="1.6" height="1.6" fill="#a0a0a0"/><rect x="6.8" y="70.8" width="1.3" height="1.3" fill="#b8b8b8"/><rect x="2.5" y="73" width="1.6" height="1.6" fill="#a0a0a0"/><rect x="6.8" y="74.8" width="1.3" height="1.3" fill="#b8b8b8"/><rect x="2.5" y="77" width="1.6" height="1.6" fill="#a0a0a0"/><rect x="6.8" y="78.8" width="1.3" height="1.3" fill="#b8b8b8"/><rect x="2.5" y="81" width="1.6" height="1.6" fill="#a0a0a0"/><rect x="6.8" y="82.8" width="1.3" height="1.3" fill="#b8b8b8"/><rect x="2.5" y="85" width="1.6" height="1.6" fill="#a0a0a0"/><rect x="6.8" y="86.8" width="1.3" height="1.3" fill="#b8b8b8"/><rect x="2.5" y="89" width="1.6" height="1.6" fill="#a0a0a0"/><rect x="6.8" y="90.8" width="1.3" height="1.3" fill="#b8b8b8"/><rect x="2.5" y="93" width="1.6" height="1.6" fill="#a0a0a0"/><rect x="6.8" y="94.8" width="1.3" height="1.3" fill="#b8b8b8"/><rect x="2.5" y="97" width="1.6" height="1.6" fill="#a0a0a0"/><rect x="6.8" y="98.8" width="1.3" height="1.3" fill="#b8b8b8"/><rect x="2.5" y="101" width="1.6" height="1.6" fill="#a0a0a0"/><rect x="6.8" y="102.8" width="1.3" height="1.3" fill="#b8b8b8"/><rect x="2.5" y="105" width="1.6" height="1.6" fill="#a0a0a0"/><rect x="6.8" y="106.8" width="1.3" height="1.3" fill="#b8b8b8"/><rect x="1202.5" y="69" width="1.6" height="1.6" fill="#a0a0a0"/><rect x="1206.8" y="70.8" width="1.3" height="1.3" fill="#b8b8b8"/><rect x="1202.5" y="73" width="1.6" height="1.6" fill="#a0a0a0"/><rect x="1206.8" y="74.8" width="1.3" height="1.3" fill="#b8b8b8"/><rect x="1202.5" y="77" width="1.6" height="1.6" fill="#a0a0a0"/><rect x="1206.8" y="78.8" width="1.3" height="1.3" fill="#b8b8b8"/><rect x="1202.5" y="81" width="1.6" height="1.6" fill="#a0a0a0"/><rect x="1206.8" y="82.8" width="1.3" height="1.3" fill="#b8b8b8"/><rect x="1202.5" y="85" width="1.6" height="1.6" fill="#a0a0a0"/><rect x="1206.8" y="86.8" width="1.3" height="1.3" fill="#b8b8b8"/><rect x="1202.5" y="89" width="1.6" height="1.6" fill="#a0a0a0"/><rect x="1206.8" y="90.8" width="1.3" height="1.3" fill="#b8b8b8"/><rect x="1202.5" y="93" width="1.6" height="1.6" fill="#a0a0a0"/><rect x="1206.8" y="94.8" width="1.3" height="1.3" fill="#b8b8b8"/><rect x="1202.5" y="97" width="1.6" height="1.6" fill="#a0a0a0"/><rect x="1206.8" y="98.8" width="1.3" height="1.3" fill="#b8b8b8"/><rect x="1202.5" y="101" width="1.6" height="1.6" fill="#a0a0a0"/><rect x="1206.8" y="102.8" width="1.3" height="1.3" fill="#b8b8b8"/><rect x="1202.5" y="105" width="1.6" height="1.6" fill="#a0a0a0"/><rect x="1206.8" y="106.8" width="1.3" height="1.3" fill="#b8b8b8"/><rect x="1661.5" y="69" width="1.6" height="1.6" fill="#a0a0a0"/><rect x="1665.8" y="70.8" width="1.3" height="1.3" fill="#b8b8b8"/><rect x="1661.5" y="73" width="1.6" height="1.6" fill="#a0a0a0"/><rect x="1665.8" y="74.8" width="1.3" height="1.3" fill="#b8b8b8"/><rect x="1661.5" y="77" width="1.6" height="1.6" fill="#a0a0a0"/><rect x="1665.8" y="78.8" width="1.3" height="1.3" fill="#b8b8b8"/><rect x="1661.5" y="81" width="1.6" height="1.6" fill="#a0a0a0"/><rect x="1665.8" y="82.8" width="1.3" height="1.3" fill="#b8b8b8"/><rect x="1661.5" y="85" width="1.6" height="1.6" fill="#a0a0a0"/><rect x="1665.8" y="86.8" width="1.3" height="1.3" fill="#b8b8b8"/><rect x="1661.5" y="89" width="1.6" height="1.6" fill="#a0a0a0"/><rect x="1665.8" y="90.8" width="1.3" height="1.3" fill="#b8b8b8"/><rect x="1661.5" y="93" width="1.6" height="1.6" fill="#a0a0a0"/><rect x="1665.8" y="94.8" width="1.3" height="1.3" fill="#b8b8b8"/><rect x="1661.5" y="97" width="1.6" height="1.6" fill="#a0a0a0"/><rect x="1665.8" y="98.8" width="1.3" height="1.3" fill="#b8b8b8"/><rect x="1661.5" y="101" width="1.6" height="1.6" fill="#a0a0a0"/><rect x="1665.8" y="102.8" width="1.3" height="1.3" fill="#b8b8b8"/><rect x="1661.5" y="105" width="1.6" height="1.6" fill="#a0a0a0"/><rect x="1665.8" y="106.8" width="1.3" height="1.3" fill="#b8b8b8"/><!-- OHLC bars -->
<g stroke="#18a818" stroke-width="1.9" fill="none">
<path d="M774 80 V99 M769.4 94 H774 M774 85 H779"/>
<path d="M789.1 74 V93 M784.4 78.8 H789.1 M789.1 88 H794.4"/>
</g>
<!-- pressed candles -->
<rect x="807" y="67" width="44" height="40.5" fill="#d5e3f2"/>
<path d="M807.5 107.5 V67.5 H851" stroke="#a8a8a8" stroke-width="1" fill="none"/>
<g stroke="#18a818" stroke-width="1.9" fill="#d8f8d8">
<line x1="822.8" y1="75.6" x2="822.8" y2="97.5"/><rect x="819.6" y="79.2" width="6.4" height="14.6"/>
<line x1="834.9" y1="74" x2="834.9" y2="99.4"/><rect x="831.6" y="77.7" width="6.6" height="18.3"/>
</g>
<!-- line -->
<path d="M863.1 91 H866.9 L871.25 81.25 L875.6 93.75 L881.25 79.4 L885 86.5 H888.75" stroke="#18a818" stroke-width="1.9" fill="none" stroke-linejoin="round"/>
<!-- zoom in/out -->
<g stroke="#1060a8" stroke-width="1.9" fill="#bee0fa">
<circle cx="925.6" cy="83.6" r="8.6"/><path d="M931.7 89.9 L940.8 99.2 M921.1 83.6 H930.1 M925.6 79.1 V88.1" fill="none"/>
<circle cx="972.75" cy="83.6" r="8.6"/><path d="M978.85 89.9 L987.95 99.2 M968.25 83.6 H977.25" fill="none"/>
<rect x="1010.6" y="74.6" width="24.4" height="24.4" rx="3"/><path d="M1022.8 74.6 V99 M1010.6 86.8 H1035" fill="none"/>
</g>
<!-- shift end / autoscroll -->
<g stroke="#18a818" stroke-width="1.7" fill="#d8f8d8">
<line x1="1063.8" y1="77.1" x2="1063.8" y2="93.5"/><rect x="1062" y="80" width="3.7" height="9.8"/>
<line x1="1069.6" y1="75.3" x2="1069.6" y2="94.6"/><rect x="1067.8" y="78.8" width="3.7" height="12.7"/>
<line x1="1110.9" y1="77.1" x2="1110.9" y2="93.5"/><rect x="1109.1" y="80" width="3.7" height="9.8"/>
<line x1="1116.7" y1="75.3" x2="1116.7" y2="94.6"/><rect x="1114.9" y="78.8" width="3.7" height="12.7"/>
</g>
<path d="M1075 85.2 H1085 M1080.3 80.2 L1085.3 85.2 L1080.3 90.2" stroke="#18a818" stroke-width="1.8" fill="none"/>
<path d="M1089 74.2 V96.1 M1122.7 74.2 V96.1 M1137 85.2 H1127 M1131.9 80.2 L1126.9 85.2 L1131.9 90.2" stroke="#1060a8" stroke-width="1.9" fill="none"/>
<path d="M1061.6 100.2 H1090 M1108.6 100.2 H1137" stroke="#a8a8a8" stroke-width="1.8"/>
<!-- screenshot -->
<g stroke="#1060a8" stroke-width="1.8" fill="none" stroke-linecap="butt">
<path d="M1162.2 77.2 Q1162.2 73.2 1166 73.2 M1186 73.2 Q1189.4 73.2 1189.4 77 M1162.2 96.6 Q1162.2 100.4 1166 100.4"/>
<path d="M1167.3 73.2 H1170.7 M1173.5 73.2 H1177.7 M1180.8 73.2 H1184.2 M1162.2 78.3 V81.4 M1162.2 84.7 V88.4 M1162.2 91.9 V94.8 M1189.4 78.3 V82.8"/>
</g>
<path d="M1171.2 100.4 Q1169.4 100.4 1169.4 98.6 V89.6 Q1169.4 87.8 1171.2 87.8 H1173 Q1174 87.8 1174.6 86.4 L1175.2 85.4 Q1175.8 84.3 1177 84.3 H1181.6 Q1182.8 84.3 1183.4 85.4 L1184 86.4 Q1184.6 87.8 1185.6 87.8 H1187.9 Q1189.7 87.8 1189.7 89.6 V98.6 Q1189.7 100.4 1187.9 100.4 Z" fill="#bee0fa" stroke="#1060a8" stroke-width="1.8" stroke-linejoin="round"/>
<circle cx="1179.5" cy="92.5" r="2.8" fill="none" stroke="#1060a8" stroke-width="1.7"/>
<!-- pressed cursor -->
<rect x="1212" y="67" width="44" height="40.5" fill="#d5e3f2"/>
<path d="M1212.5 107.5 V67.5 H1256" stroke="#a8a8a8" stroke-width="1" fill="none"/>
<path d="M1225 78.1 L1242 84.6 L1237 88.3 L1242.6 94 Q1243 94.6 1242.4 95.3 L1241.6 96.1 Q1241 96.7 1240.4 96.1 L1234.8 90.6 L1231.4 95 Z" fill="#bee0fa" stroke="#1060a8" stroke-width="1.8" stroke-linejoin="round"/>
<!-- crosshair, vline, hline, trend, channel, fibo, T -->
<g stroke="#1060a8" stroke-width="1.9" fill="none">
<path d="M1268.1 86.5 H1293.1 M1280.6 74 V99"/>
<path d="M1333.75 72.5 V100.6"/>
<path d="M1367 86.5 H1395"/>
<path d="M1417.25 97.25 L1438.1 76"/>
<path d="M1464 88.5 L1476.25 76 M1473.1 97.25 L1488.75 81.9"/>
<path d="M1508 74.6 H1536 M1508 82.25 H1532 M1508 89.75 H1536 M1511 97.1 H1536"/>
<path d="M1559 77.75 H1578.75 M1568.5 77.75 V96.5"/>
</g>
<g stroke="#1060a8" stroke-width="1.7" fill="#bee0fa">
<circle cx="1280.6" cy="86.5" r="3.1"/>
<circle cx="1333.75" cy="86.5" r="3.1"/>
<circle cx="1380.6" cy="86.5" r="3.1"/>
<circle cx="1417.25" cy="97.25" r="3"/><circle cx="1438.1" cy="76" r="3"/>
<circle cx="1464" cy="88.5" r="3"/><circle cx="1476.25" cy="76" r="3"/><circle cx="1473.1" cy="97.25" r="3"/>
<circle cx="1532" cy="82.25" r="3"/><circle cx="1511" cy="97.1" r="3"/>
<!-- shapes -->
<path d="M1602.6 84 L1608 74.6 L1613.5 84 Z" stroke-linejoin="round"/>
<circle cx="1622" cy="79.1" r="4.6"/>
<path d="M1608 89.2 L1613.6 93 L1611.6 98.7 H1604.4 L1602.4 93 Z" stroke-linejoin="round"/>
<rect x="1617.5" y="89.3" width="9.5" height="9.5" rx="2"/>
</g>
<path d="M1640 88 H1651 L1645.5 94.1 Z" fill="#000"/>
<!-- search / user -->
<g stroke="#111" stroke-width="1.6" fill="none">
<circle cx="1712.2" cy="85.2" r="7.6"/><path d="M1717.6 90.8 L1723.3 95.9"/>
<circle cx="1758.7" cy="86.7" r="8.8"/>
<circle cx="1759.5" cy="83.3" r="3"/>
<path d="M1753.2 93.2 Q1757.5 88.8 1765.5 91.2"/>
</g>
<circle cx="1771.9" cy="82.5" r="12.3" fill="#e0402a"/>
<text x="1771.9" y="89.5" font-family="Liberation Sans" font-size="19" font-weight="bold" fill="#fff" text-anchor="middle">4</text>
<!-- LVL -->
<path d="M1817.6 75.8 L1823 81.2 H1819.8 V86.4 H1815.4 V81.2 H1812.2 Z" fill="#d8f8d8" stroke="#10a020" stroke-width="1.6" stroke-linejoin="round"/>
<text x="1818.1" y="97.8" font-family="Liberation Sans" font-size="11.5" font-weight="bold" fill="#10a020" text-anchor="middle" letter-spacing="-0.3">LVL</text>
<!-- progress -->
<rect x="1841.5" y="79.7" width="67" height="17.8" fill="#fff" stroke="#808080" stroke-width="1.3"/>
<rect x="1842.2" y="80.4" width="9.3" height="16.4" fill="#40d840"/>
<rect x="1918.5" y="82" width="2" height="13" fill="#1060a8"/>
<!-- tab arrows -->
<path d="M1872.2 120.1 V129.2 L1867.4 124.65 Z M1897.9 120.1 V129.2 L1902.9 124.65 Z" fill="#a8a8a8"/>
<!-- nav close X, strip X -->
<path d="M334.6 120.5 L346.2 130.6 M346.2 120.5 L334.6 130.6" stroke="#000" stroke-width="2.2"/>
<path d="M9 154 L20.2 164.2 M20.2 154 L9 164.2" stroke="#000" stroke-width="2.1"/>
<!-- status signal -->
<g fill="#20a020">
<rect x="1751" y="995" width="2.4" height="5"/><rect x="1755.2" y="992" width="2.4" height="8"/><rect x="1759.4" y="989" width="2.4" height="11"/><rect x="1763.6" y="986" width="2.4" height="14"/><rect x="1767.8" y="983" width="2.4" height="17"/>
</g>
</svg>
</body></html>
